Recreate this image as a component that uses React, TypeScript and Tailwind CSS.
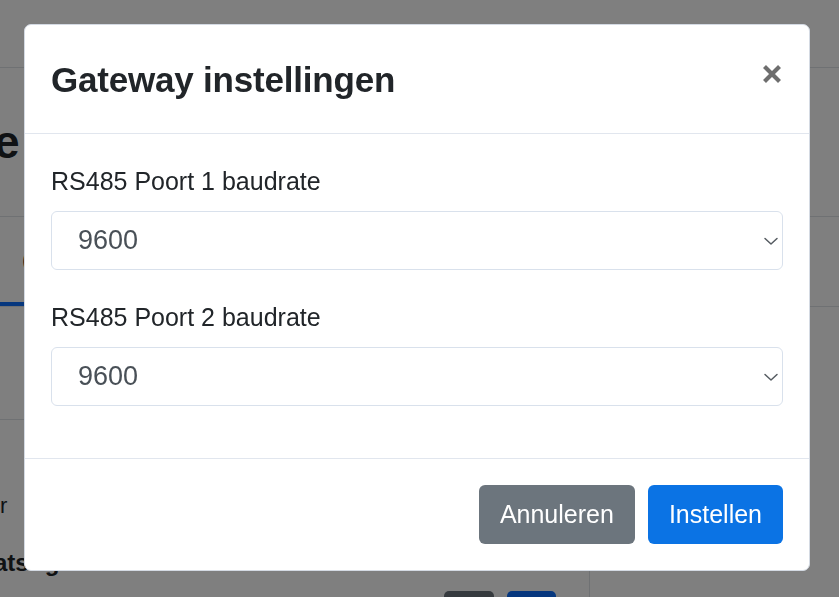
import React, { useState } from 'react';

const font = { fontFamily: '"Liberation Sans", Arial, Helvetica, sans-serif' };

const Chevron: React.FC = () => (
  <svg className="pointer-events-none absolute right-[4px] top-1/2 -translate-y-1/2" width="16" height="12" viewBox="0 0 16 12" fill="none">
    <path d="M2 3.5l6 5.5 6-5.5" stroke="#555b61" strokeWidth="1.5" strokeLinecap="round" strokeLinejoin="round" />
  </svg>
);

const BaudSelect: React.FC<{ value: string; onChange: (v: string) => void }> = ({ value, onChange }) => (
  <div className="relative">
    <select
      value={value}
      onChange={(e) => onChange(e.target.value)}
      className="h-[59px] w-full appearance-none rounded-[6px] border border-[#d9e1ec] bg-white pl-[26px] pr-[40px] text-[27px] text-[#495057] outline-none"
    >
      {['1200', '2400', '4800', '9600', '19200', '38400', '57600', '115200'].map((b) => (
        <option key={b} value={b}>{b}</option>
      ))}
    </select>
    <Chevron />
  </div>
);

const App: React.FC = () => {
  const [port1, setPort1] = useState('9600');
  const [port2, setPort2] = useState('9600');

  return (
    <div className="relative flex h-[597px] w-[839px] flex-col overflow-hidden bg-white" style={font}>
      {/* Page behind the modal */}
      <div className="h-[68px] shrink-0 border-b border-[#dee2e6]" />
      <div className="flex h-[149px] shrink-0 items-center border-b border-[#dee2e6]">
        <h1 className="-ml-[6px] text-[46px] font-bold text-[#212529]">e</h1>
      </div>
      <div className="flex h-[90px] shrink-0 border-b border-[#dee2e6]">
        <div className="flex w-[60px] items-center border-b-[4px] border-[#0d6efd] pl-[22px] text-[22px] text-[#212529]">
          (
        </div>
      </div>
      <div className="flex flex-1">
        <div className="w-[590px] border-r border-[#dee2e6]">
          <div className="h-[113px] border-b border-[#dee2e6]" />
          <div className="mt-[72px] h-[28px] text-[22px] leading-[28px] text-[#212529]">r</div>
          <div className="mt-[23px] flex h-[40px] items-center gap-[16px] text-[24px] font-bold leading-[40px] text-[#212529]">
            <span className="-ml-[6px]">ats</span>
            <span>g</span>
          </div>
          <div className="flex justify-end gap-[13px] pr-[33px] pt-[8px]">
            <div className="h-[30px] w-[50px] rounded-[5px] bg-[#6c757d]" />
            <div className="h-[30px] w-[49px] rounded-[5px] bg-[#0d6efd]" />
          </div>
        </div>
      </div>

      {/* Backdrop */}
      <div className="fixed inset-0 bg-black/50" />

      {/* Modal */}
      <div className="absolute left-[24px] top-[24px] w-[786px] overflow-hidden rounded-[7px] border border-[#d4dae3] bg-white">
        <div className="flex h-[109px] items-center justify-between border-b border-[#e1e6ee] pl-[26px] pr-[26px]">
          <h5 className="text-[35px] font-bold leading-none tracking-[-0.2px] text-[#212529]">Gateway instellingen</h5>
          <button className="-mt-[10px] flex h-[22px] w-[22px] items-center justify-center" aria-label="Sluiten">
            <svg width="20" height="20" viewBox="0 0 20 20">
              <path d="M2.5 2.5l15 15M17.5 2.5l-15 15" stroke="#6e6e6e" strokeWidth="4.2" strokeLinecap="butt" />
            </svg>
          </button>
        </div>

        <div className="px-[26px] pb-[52px] pt-[28px]">
          <label className="mb-[11px] block text-[25px] leading-[38px] text-[#212529]">RS485 Poort 1 baudrate</label>
          <BaudSelect value={port1} onChange={setPort1} />
          <label className="mb-[11px] mt-[28px] block text-[25px] leading-[38px] text-[#212529]">RS485 Poort 2 baudrate</label>
          <BaudSelect value={port2} onChange={setPort2} />
        </div>

        <div className="flex justify-end gap-[13px] border-t border-[#e1e6ee] px-[26px] pb-[26px] pt-[26px]">
          <button className="h-[59px] rounded-[6px] bg-[#6c757d] px-[21px] text-[25px] text-white">Annuleren</button>
          <button className="h-[59px] rounded-[6px] bg-[#0b73e4] px-[21px] text-[25px] text-white">Instellen</button>
        </div>
      </div>
    </div>
  );
};

export default App;
